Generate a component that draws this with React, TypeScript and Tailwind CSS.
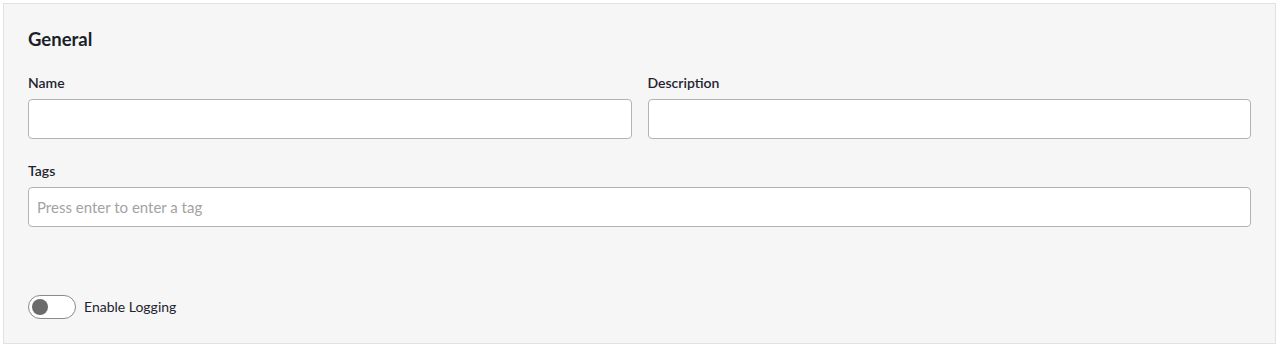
import React from "react";

export default function App() {
  return (
    <div className="w-full h-[348px] bg-white p-[3px] pr-[4px]" style={{ fontFamily: "Lato, 'Noto Sans', sans-serif" }}>
      <div className="h-[341px] border border-[#e2e2e2] bg-[#f6f6f6] px-6 pt-[23px]">
        <h2 className="text-[18.5px] leading-[24px] font-bold text-[#1b1f29]">General</h2>
        <div className="mt-[24px] grid grid-cols-2 gap-4">
          <div>
            <label className="block text-[14px] leading-[16px] font-semibold text-[#1f2430]">Name</label>
            <input className="mt-[8px] block w-full h-[40px] rounded-[4px] border border-[#b3b3b3] bg-white px-2 text-[13px] outline-none" />
          </div>
          <div>
            <label className="block text-[14px] leading-[16px] font-semibold text-[#1f2430]">Description</label>
            <input className="mt-[8px] block w-full h-[40px] rounded-[4px] border border-[#b3b3b3] bg-white px-2 text-[13px] outline-none" />
          </div>
        </div>
        <div className="mt-[24px]">
          <label className="block text-[14px] leading-[16px] font-semibold text-[#1f2430]">Tags</label>
          <input
            placeholder="Press enter to enter a tag"
            className="mt-[8px] block w-full h-[40px] rounded-[4px] border border-[#b3b3b3] bg-white px-2 text-[15px] outline-none placeholder:text-[#a3a3a3]"
          />
        </div>
        <div className="mt-[68px] flex items-center gap-2">
          <div className="w-[48px] h-[24px] rounded-full border border-[#8a8a8a] bg-white flex items-center pl-[3px]">
            <div className="w-[16px] h-[16px] rounded-full bg-[#6b6b6b]" />
          </div>
          <span className="text-[14px] leading-[20px] -mt-[1px] text-[#1f2430]">Enable Logging</span>
        </div>
      </div>
    </div>
  );
}
